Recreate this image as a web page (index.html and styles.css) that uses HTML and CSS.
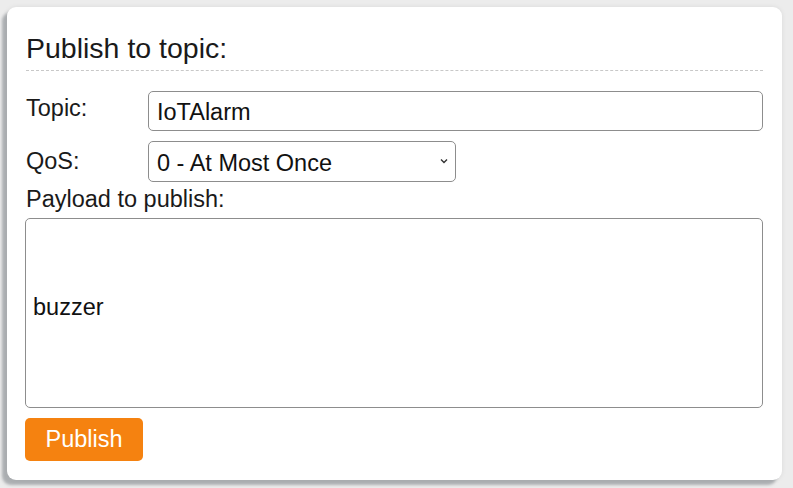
FILE: index.html
```html
<!DOCTYPE html>
<html>
<head>
<meta charset="utf-8">
<link rel="stylesheet" href="styles.css">
</head>
<body>
<div class="card">
  <h2 class="title">Publish to topic:</h2>
  <div class="form">
    <label class="label label-topic" for="topic">Topic:</label>
    <input class="field" id="topic" type="text" value="IoTAlarm">
    <label class="label" for="qos">QoS:</label>
    <div class="select-wrap">
      <select class="select" id="qos">
        <option>0 - At Most Once</option>
      </select>
      <svg class="chev" width="8" height="6" viewBox="0 0 8 6"><path d="M1 1.5 L4 4.5 L7 1.5" fill="none" stroke="#333" stroke-width="1.4"/></svg>
    </div>
  </div>
  <div class="payload-label">Payload to publish:</div>
  <textarea class="payload">buzzer</textarea>
  <button class="btn">Publish</button>
</div>
</body>
</html>
```
FILE: styles.css
```css
html, body {
  margin: 0;
  padding: 0;
}
body {
  background: #ececec;
  font-family: "Liberation Sans", Arial, sans-serif;
  color: #1a1a1a;
  padding: 7px 11px 8px 7px;
  height: 488px;
  box-sizing: border-box;
  overflow: hidden;
}
.card {
  background: #fff;
  border-radius: 9px;
  box-shadow: -5px 5px 3px rgba(120, 126, 132, 0.55), 0 0 5px rgba(0, 0, 0, 0.08);
  padding: 25px 19px 19px 19px;
  height: 473px;
  box-sizing: border-box;
}
.title {
  margin: 0;
  font-weight: normal;
  font-size: 28.5px;
  line-height: 32px;
  padding-bottom: 6px;
  border-bottom: 1px dashed #c8c8c8;
  color: #1a1a1a;
}
.form {
  display: grid;
  grid-template-columns: 122px 1fr;
  row-gap: 10px;
  margin-top: 20px;
}
.label {
  font-size: 23.5px;
  line-height: 27px;
  padding-top: 7px;
}
.label-topic {
  padding-top: 4px;
}
.field {
  font-family: "Liberation Sans", Arial, sans-serif;
  font-size: 23.5px;
  height: 40px;
  box-sizing: border-box;
  border: 1px solid #8d8d8d;
  border-radius: 5px;
  padding: 2px 8px 0 8px;
  color: #111;
  width: 100%;
  margin: 0;
}
.select-wrap {
  position: relative;
  width: 308px;
}
.select {
  -webkit-appearance: none;
  appearance: none;
  font-family: "Liberation Sans", Arial, sans-serif;
  font-size: 23.5px;
  height: 41px;
  width: 308px;
  box-sizing: border-box;
  border: 1px solid #8d8d8d;
  border-radius: 5px;
  padding: 2px 8px 0 8px;
  background: #fff;
  color: #111;
  margin: 0;
}
.chev {
  position: absolute;
  right: 8px;
  top: 17px;
  pointer-events: none;
}
.payload-label {
  font-size: 23.5px;
  line-height: 27px;
  margin-top: 4px;
}
.payload {
  display: block;
  width: 100%;
  height: 190px;
  box-sizing: border-box;
  margin: 5px 0 0 -1px;
  width: calc(100% + 1px);
  border: 1px solid #8d8d8d;
  border-radius: 5px;
  font-family: "Liberation Sans", Arial, sans-serif;
  font-size: 23.5px;
  line-height: 27px;
  padding: 75px 7px 0 7px;
  resize: none;
  color: #111;
}
.btn {
  display: block;
  margin: 10px 0 0 -1px;
  width: 118px;
  height: 43px;
  background: #f58210;
  color: #fff;
  border: none;
  border-radius: 5px;
  font-family: "Liberation Sans", Arial, sans-serif;
  font-size: 23.5px;
  padding: 0;
}
```
